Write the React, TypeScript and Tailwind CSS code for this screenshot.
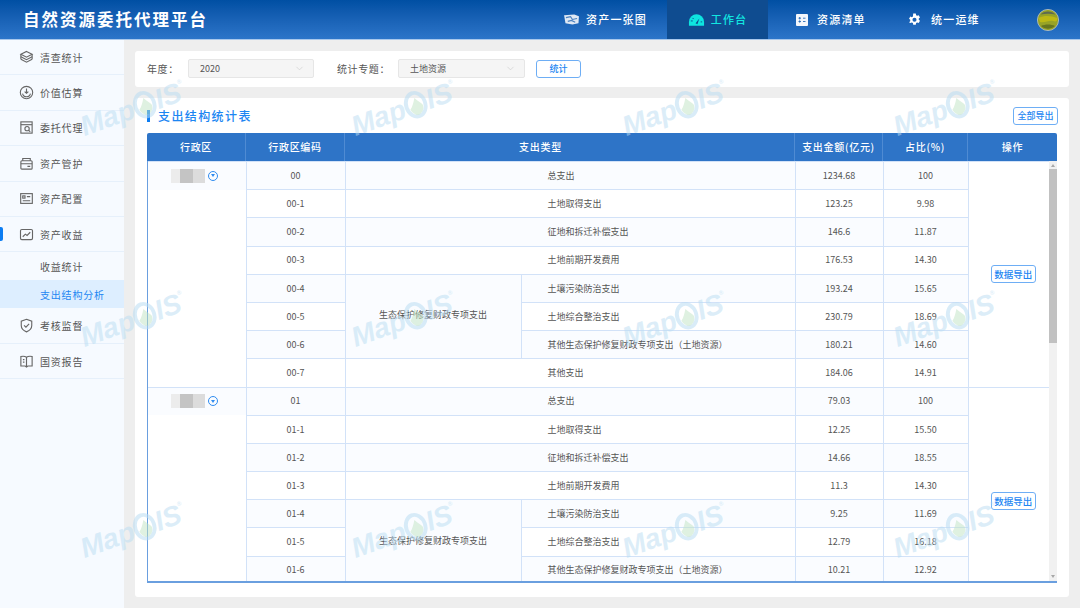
import { Fragment } from 'react'
import { ChevronDown } from 'lucide-react'

const FONT = "font-['Noto_Sans_CJK_SC','Noto_Sans',sans-serif]"

const icon = 'h-[15px] w-[15px] fill-none stroke-[#666] stroke-[1.2]'

const LayersIcon = () => (
  <svg viewBox="0 0 16 16" className={icon}>
    <path d="M8 1.5 14 4.6 8 7.7 2 4.6Z" />
    <path d="M2 7.2 8 10.3 14 7.2" />
    <path d="M2 9.8 8 13 14 9.8" />
    <path d="M2 4.6V9.8M14 4.6V9.8" />
  </svg>
)
const ValueIcon = () => (
  <svg viewBox="0 0 16 16" className={icon}>
    <circle cx="8" cy="8" r="6.6" />
    <path d="M3.8 9.2A4.3 4.3 0 0 0 12.2 9.2" />
    <path d="M8 3.8V8.6M6 7 8 8.8 10 7" />
  </svg>
)
const ProxyIcon = () => (
  <svg viewBox="0 0 16 16" className={icon}>
    <rect x="2" y="2" width="12" height="12" />
    <path d="M2 5H14" />
    <circle cx="8.6" cy="9.2" r="2.3" />
    <path d="M10.4 11 12 12.6" />
  </svg>
)
const CareIcon = () => (
  <svg viewBox="0 0 16 16" className={icon}>
    <path d="M4 5V2.6H12V5" />
    <rect x="2" y="5" width="12" height="9" rx="1" />
    <path d="M2 8.2H14M9 11H12" />
  </svg>
)
const ConfigIcon = () => (
  <svg viewBox="0 0 16 16" className={icon}>
    <rect x="1.8" y="2.8" width="12.4" height="10.4" />
    <rect x="4" y="5.2" width="2.4" height="2.4" />
    <path d="M8.4 6H12M4 10.4H12" />
  </svg>
)
const IncomeIcon = () => (
  <svg viewBox="0 0 16 16" className={icon}>
    <rect x="1.6" y="2.6" width="12.8" height="10.8" rx="1.4" />
    <path d="M4 10.4 6.8 7.6 8.6 9 12 5.6" />
  </svg>
)
const ShieldIcon = () => (
  <svg viewBox="0 0 16 16" className={icon}>
    <path d="M8 1.4 13.6 3.4V8C13.6 11.2 11 13.6 8 14.8 5 13.6 2.4 11.2 2.4 8V3.4Z" />
    <path d="M5.4 7.8 7.4 9.8 10.8 6.2" />
  </svg>
)
const BookIcon = () => (
  <svg viewBox="0 0 16 16" className={icon}>
    <path d="M8 3.4C6.6 2.4 4 2.2 2 2.6V12.8H6.6L8 14 9.4 12.8H14V2.6C12 2.2 9.4 2.4 8 3.4ZM8 3.4V14" />
    <path d="M4.2 6H5.8M4.2 8.6H5.8" />
  </svg>
)

const MapNavIcon = () => (
  <svg viewBox="0 0 18 14" className="h-[13px] w-[17px]">
    <path d="M1 2.5 12 1.5 17 3.5 16.5 11 10 12.5 2.5 11Z" fill="#dfe8f4" />
    <path d="M3 5 8 4 10 7 15 6M5 9 9 8 13 10" stroke="#4a80bf" strokeWidth="1.2" fill="none" />
  </svg>
)
const GaugeNavIcon = () => (
  <svg viewBox="0 0 18 14" className="h-[14px] w-[17px]">
    <path d="M9 1A8 8 0 0 0 1 9V13H17V9A8 8 0 0 0 9 1Z" fill="#0ee5e0" />
    <path d="M8 10.5 12 5.5 10 11.5Z" fill="#0f4c90" />
    <path d="M3 8H5M4.8 4.8 6 6M13.4 9H15" stroke="#0f4c90" strokeWidth="1" />
  </svg>
)
const ListNavIcon = () => (
  <svg viewBox="0 0 12 12" className="h-3 w-3">
    <rect width="12" height="12" rx="1" fill="#f4f7fc" />
    <path d="M2.5 4.2H5M7 4.2H9.5M2.5 7.5H5M7 7.5H9.5M3.7 3V5.4M3.7 6.3V8.7" stroke="#2a6cb8" strokeWidth="0.9" />
  </svg>
)
const GearNavIcon = () => (
  <svg viewBox="0 0 14 14" className="h-[13px] w-[13px]">
    <path
      fillRule="evenodd"
      fill="#fff"
      d="M5.6.6h2.8l.3 1.7 1.2.7 1.6-.6 1.4 2.4-1.3 1.1v1.4l1.3 1.1-1.4 2.4-1.6-.6-1.2.7-.3 1.7H5.6l-.3-1.7-1.2-.7-1.6.6L1.1 9.9l1.3-1.1V7.4L1.1 6.3l1.4-2.4 1.6.6 1.2-.7ZM7 5a2.2 2.2 0 1 0 0 4.4A2.2 2.2 0 0 0 7 5Z"
    />
  </svg>
)
const Avatar = () => (
  <svg viewBox="0 0 22 22" className="h-[22px] w-[22px]">
    <circle cx="11" cy="11" r="10.6" fill="#98a326" stroke="#b8c2cc" strokeWidth="0.8" />
    <path d="M3.5 5.5C7 1.5 15 1.5 18.5 5.5 14 4.5 8 4.5 3.5 5.5Z" fill="#5d6a52" />
    <path d="M1.5 9C8 6 14 7 20.5 9 20.5 12 19 13 16 12 12 11 8 14 3 13Z" fill="#bdb915" />
    <path d="M4 17C8 15 14 15 18 17 14 20.5 8 20.5 4 17Z" fill="#66751f" />
  </svg>
)

const Watermark = () => (
  <div className="flex -rotate-[20deg] items-center font-['Liberation_Sans',sans-serif] text-[28px] font-bold italic leading-none text-[#b9dcf2]/50">
    <span>Map</span>
    <svg viewBox="0 0 26 30" className="mx-[-1px] h-[30px] w-[25px]">
      <ellipse cx="13" cy="15" rx="10" ry="12.5" fill="none" stroke="#b9dcf2" strokeOpacity="0.55" strokeWidth="4" />
      <path d="M6 18C9 16 11 13 14 8 16 12 19 15 20 18 19 24 15 26 12 26 9 25 7 22 6 18Z" fill="#bfe3c4" fillOpacity="0.5" />
    </svg>
    <span>IS</span>
    <span className="mb-5 text-[6px] not-italic">®</span>
  </div>
)

const menu = [
  { label: '清查统计', Icon: LayersIcon },
  { label: '价值估算', Icon: ValueIcon },
  { label: '委托代理', Icon: ProxyIcon },
  { label: '资产管护', Icon: CareIcon },
  { label: '资产配置', Icon: ConfigIcon },
  { label: '资产收益', Icon: IncomeIcon, open: true },
]

const types = [
  '总支出',
  '土地取得支出',
  '征地和拆迁补偿支出',
  '土地前期开发费用',
  '土壤污染防治支出',
  '土地综合整治支出',
  '其他生态保护修复财政专项支出（土地资源）',
  '其他支出',
]

const groups = [
  {
    buttonClass: 'ml-[9px] w-[45px] text-[9.5px]',
    rows: [
      ['00', '1234.68', '100'],
      ['00-1', '123.25', '9.98'],
      ['00-2', '146.6', '11.87'],
      ['00-3', '176.53', '14.30'],
      ['00-4', '193.24', '15.65'],
      ['00-5', '230.79', '18.69'],
      ['00-6', '180.21', '14.60'],
      ['00-7', '184.06', '14.91'],
    ],
  },
  {
    // last row of this group is below the fold in the screenshot
    buttonClass: 'ml-[9px] mt-[30px] w-[45px] text-[9.5px]',
    rows: [
      ['01', '79.03', '100'],
      ['01-1', '12.25', '15.50'],
      ['01-2', '14.66', '18.55'],
      ['01-3', '11.3', '14.30'],
      ['01-4', '9.25', '11.69'],
      ['01-5', '12.79', '16.18'],
      ['01-6', '10.21', '12.92'],
    ],
  },
]

const cell = 'border border-[#d2e2f8] p-0 text-center align-middle'

function Mosaic() {
  return (
    <div className="flex h-[14px] w-[34px] blur-[0.5px]">
      <div className="w-[9px] bg-[#ececec]" />
      <div className="w-[13px] bg-[#c4c4c4]" />
      <div className="w-[12px] bg-[#dcdcdc]" />
    </div>
  )
}

function OutlineButton({ label, className }: { label: string; className: string }) {
  return (
    <button
      type="button"
      className={`h-[18px] rounded-[3px] border border-[#6eaef5] bg-white font-medium text-[#1c86f2] ${className}`}
    >
      {label}
    </button>
  )
}

function Select({ value, className }: { value: string; className: string }) {
  return (
    <div className={`flex h-[19px] items-center justify-between rounded-[2px] border border-[#e6e6e6] bg-[#f5f5f5] pl-[11px] pr-2 text-[9px] tracking-normal text-[#555] ${className}`}>
      {value}
      <ChevronDown className="h-[11px] w-[11px] text-[#c4c4c4]" strokeWidth={1.2} />
    </div>
  )
}

export default function App() {
  return (
    <div className={`relative flex h-[608px] w-[1080px] flex-col overflow-hidden bg-[#eeeeee] ${FONT}`}>
      <header className="flex h-10 shrink-0 items-stretch border-b border-[#a9c8ec] bg-gradient-to-b from-[#004fa3] to-[#2c75c9] text-white">
        <h1 className="pl-[23px] text-[16.5px] font-bold leading-[39px] tracking-[2px]">自然资源委托代理平台</h1>
        <nav className="ml-auto flex text-[11px] font-medium tracking-[1.2px]">
          <a className="flex w-[124px] items-center justify-end gap-[6px] pr-5">
            <MapNavIcon />
            资产一张图
          </a>
          <a className="flex w-[101px] items-center justify-center gap-[6px] bg-[#0f4c90] text-[#12e6e0]">
            <GaugeNavIcon />
            工作台
          </a>
          <a className="flex w-[120px] items-center gap-[9px] pl-7">
            <ListNavIcon />
            资源清单
          </a>
          <a className="flex w-[149px] items-center gap-[10px] pl-5">
            <GearNavIcon />
            统一运维
          </a>
        </nav>
        <div className="flex w-[43px] items-center">
          <Avatar />
        </div>
      </header>

      <div className="flex min-h-0 flex-1">
        <aside className="w-[124px] shrink-0 bg-[#f6faff] text-[10px] tracking-[0.8px] text-[#555]">
          {menu.map(({ label, Icon, open }) => (
            <div key={label} className="relative flex h-[35.4px] items-center gap-[6px] border-b border-[#e6f0fb] pl-[19px]">
              {open && <div className="absolute left-0 top-[10px] h-[14px] w-[3px] rounded-r-[2px] bg-[#0d7df2]" />}
              <Icon />
              {label}
            </div>
          ))}
          <div className="flex h-7 items-center pl-10">收益统计</div>
          <div className="flex h-7 items-center bg-[#ddeeff] pl-10 text-[#1c86f2]">支出结构分析</div>
          <div className="flex h-9 items-center gap-[6px] border-b border-[#e6f0fb] pl-[19px]">
            <ShieldIcon />
            考核监督
          </div>
          <div className="flex h-[35px] items-center gap-[6px] border-b border-[#e6f0fb] pl-[19px]">
            <BookIcon />
            国资报告
          </div>
        </aside>

        <main className="flex min-w-0 flex-1 flex-col gap-[11px] px-[11px] pb-[11px] pt-[11px]">
          <section className="flex h-9 shrink-0 items-center rounded-[3px] bg-white pb-px pl-3 text-[10px] tracking-[0.6px] text-[#555]">
            <span className="w-[41px]">年度：</span>
            <Select value="2020" className="w-[126px]" />
            <span className="ml-[23px] w-[61px]">统计专题：</span>
            <Select value="土地资源" className="w-[127px]" />
            <OutlineButton label="统计" className="ml-[11px] w-[45px] text-[9px] tracking-normal" />
          </section>

          <section className="flex min-h-0 flex-1 flex-col rounded-[3px] bg-white px-3 pb-[14px]">
            <div className="flex h-[35px] shrink-0 items-center justify-between">
              <div className="flex items-center gap-[8px] text-[12px] font-medium tracking-[1.4px] text-[#1c86f2]">
                <div className="h-3 w-[3px] bg-[#0d7df2]" />
                支出结构统计表
              </div>
              <OutlineButton label="全部导出" className="-mr-px w-[45px] text-[9px]" />
            </div>

            <div className="grid h-7 shrink-0 grid-cols-[99px_99px_450px_88px_85px_89px] rounded-t-[2px] bg-[#2e74c7] text-center text-[10px] font-medium leading-7 tracking-[0.7px] text-white">
              <div className="border-r border-[#4f8bd3]">行政区</div>
              <div className="border-r border-[#4f8bd3]">行政区编码</div>
              <div className="border-r border-[#4f8bd3] pr-[58px]">支出类型</div>
              <div className="border-r border-[#4f8bd3]">支出金额(亿元)</div>
              <div className="border-r border-[#4f8bd3]">占比(%)</div>
              <div>操作</div>
            </div>

            <div className="flex min-h-0 flex-1 overflow-hidden border-b-2 border-l border-[#6a9fdf]">
              <table className="h-fit w-[901px] shrink-0 table-fixed border-collapse text-[9px] text-[#555]">
                <colgroup>
                  <col className="w-[98px]" />
                  <col className="w-[99px]" />
                  <col className="w-[176px]" />
                  <col className="w-[274px]" />
                  <col className="w-[88px]" />
                  <col className="w-[85px]" />
                  <col className="w-[81px]" />
                </colgroup>
                <tbody>
                  {groups.map((group) => (
                    <Fragment key={group.rows[0][0]}>
                      {group.rows.map(([code, amount, ratio], i) => {
                        const tint = i % 2 === 0 ? 'bg-[#fafcff]' : 'bg-white'
                        return (
                          <tr key={code} className={`h-[28.2px] ${tint}`}>
                            {i === 0 && (
                              <td className={`${cell} border-b-0 border-l-0`}>
                                <div className="flex items-center justify-end gap-[3px] pr-[28px]">
                                  <Mosaic />
                                  <span className="flex h-[10px] w-[10px] items-center justify-center rounded-full border border-[#2f8cf0]">
                                    <span className="h-0 w-0 border-x-[2.5px] border-t-[3px] border-x-transparent border-t-[#2f8cf0]" />
                                  </span>
                                </div>
                              </td>
                            )}
                            {i === 1 && <td rowSpan={group.rows.length - 1} className={`${cell} border-l-0 border-t-0 bg-white`} />}
                            <td className={cell}>{code}</td>
                            {i >= 4 && i <= 6 ? (
                              <>
                                {i === 4 && (
                                  <td rowSpan={3} className={`${cell} bg-[#fafcff] pb-[3px]`}>生态保护修复财政专项支出</td>
                                )}
                                <td className={`${cell} pl-[26px] text-left`}>{types[i]}</td>
                              </>
                            ) : (
                              <td colSpan={2} className={`${cell} pl-[202px] text-left`}>{types[i]}</td>
                            )}
                            <td className={cell}>{amount}</td>
                            <td className={cell}>{ratio}</td>
                            {i === 0 && (
                              <td rowSpan={group.rows.length} className={`${cell} border-r-0 bg-white`}>
                                <OutlineButton label="数据导出" className={group.buttonClass} />
                              </td>
                            )}
                          </tr>
                        )
                      })}
                    </Fragment>
                  ))}
                </tbody>
              </table>
              <div className="flex w-2 shrink-0 flex-col items-center bg-[#f1f1f1]">
                <div className="mt-[3px] h-0 w-0 border-x-[2.5px] border-b-[3px] border-x-transparent border-b-[#a8a8a8]" />
                <div className="mt-[2px] h-[174px] w-full bg-[#c1c1c1]" />
                <div className="mb-[3px] mt-auto h-0 w-0 border-x-[2.5px] border-t-[3px] border-x-transparent border-t-[#a8a8a8]" />
              </div>
            </div>
          </section>
        </main>
      </div>

      <div className="pointer-events-none absolute left-[-3px] top-[3px] grid grid-cols-[repeat(4,271px)] grid-rows-[repeat(3,211px)] place-items-center">
        {Array.from({ length: 12 }, (_, i) => (
          <Watermark key={i} />
        ))}
      </div>
    </div>
  )
}
